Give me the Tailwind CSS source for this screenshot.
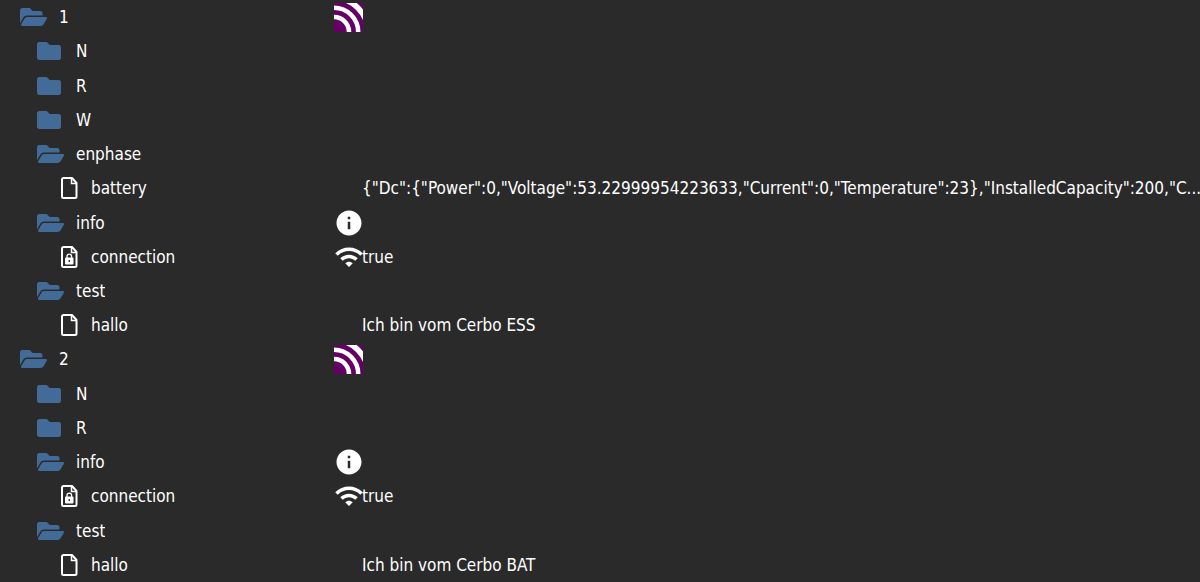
<!DOCTYPE html>
<html lang="de">
<head>
  <meta charset="UTF-8">
  <meta name="viewport" content="width=device-width, initial-scale=1.0">
  <title>Objekte</title>
  <script src="https://cdn.jsdelivr.net/npm/@tailwindcss/browser@4"></script>
</head>
<body class="bg-[#2a2a2a] text-white text-[17px] leading-6 font-['DejaVu_Sans_Condensed','DejaVu_Sans',sans-serif]">
  <!-- Icons -->
  <svg class="hidden" aria-hidden="true">
    <symbol id="closed" viewBox="0 0 576 512">
      <path d="M464 128H272l-64-64H48C21.5 64 0 85.5 0 112v288c0 26.5 21.5 48 48 48h416c26.5 0 48-21.5 48-48V176c0-26.5-21.5-48-48-48z"/>
    </symbol>
    <symbol id="open" viewBox="0 0 576 512">
      <path d="M572.694 292.093L500.27 416.248A63.997 63.997 0 0 1 444.989 448H45.025c-18.523 0-30.064-20.093-20.731-36.093l72.424-124.155A64 64 0 0 1 152 256h399.964c18.523 0 30.064 20.093 20.73 36.093zM152 224h328v-48c0-26.51-21.49-48-48-48H272l-64-64H48C21.49 64 0 85.49 0 112v278.046l69.077-118.418C86.214 242.25 117.989 224 152 224z"/>
    </symbol>
    <symbol id="file" viewBox="0 0 22 24">
      <path d="M5.500 2H14l4.500 5v13.500a1.500 1.500 0 0 1-1.500 1.500H5.500A1.500 1.500 0 0 1 4 20.500v-17A1.500 1.500 0 0 1 5.500 2z" fill="none" stroke="currentColor" stroke-width="2" stroke-linejoin="round"/>
      <path d="M13.500 2.500v5H19" fill="none" stroke="currentColor" stroke-width="1.500"/>
    </symbol>
    <symbol id="lock" viewBox="0 0 22 24">
      <use href="#file" width="22" height="24"/>
      <path d="M9 13v-1.500a2.300 2.300 0 0 1 4.600 0V13" fill="none" stroke="currentColor" stroke-width="1.300"/>
      <rect x="7" y="12.500" width="8.500" height="7" rx="1"/>
      <circle cx="11.300" cy="16" r=".9" fill="#2a2a2a"/>
    </symbol>
    <symbol id="mqtt" viewBox="0 0 29 29">
      <path fill="#660066" d="M0 0h29v29H0z"/>
      <g fill="none" stroke="#fff" stroke-width="4.500">
        <circle cx="0" cy="29" r="15"/>
        <circle cx="0" cy="29" r="24.200"/>
        <circle cx="0" cy="29" r="34" stroke-width="5.500"/>
      </g>
    </symbol>
    <symbol id="info" viewBox="0 0 24 24">
      <path d="M12 2C6.48 2 2 6.48 2 12s4.48 10 10 10 10-4.48 10-10S17.52 2 12 2zm1 15h-2v-6h2v6zm0-8h-2V7h2v2z"/>
    </symbol>
    <symbol id="wifi" viewBox="0 0 24 24">
      <path d="M1 9l2 2c4.97-4.97 13.03-4.97 18 0l2-2C16.93 2.93 7.08 2.93 1 9zm8 8l3 3 3-3c-1.65-1.66-4.34-1.66-6 0zm-4-4l2 2c2.76-2.76 7.24-2.76 10 0l2-2C15.14 9.14 8.87 9.14 5 13z"/>
    </symbol>
  </svg>

  <table class="w-full h-screen table-fixed border-collapse">
    <colgroup>
      <col class="w-[335px]">
      <col>
    </colgroup>
    <tbody id="tree"></tbody>
  </table>

  <script>
    const rows = [
      [0, 'open', '1', 'mqtt', ''],
      [1, 'closed', 'N', '', ''],
      [1, 'closed', 'R', '', ''],
      [1, 'closed', 'W', '', ''],
      [1, 'open', 'enphase', '', ''],
      [2, 'file', 'battery', '', '{"Dc":{"Power":0,"Voltage":53.22999954223633,"Current":0,"Temperature":23},"InstalledCapacity":200,"C...'],
      [1, 'open', 'info', 'info', ''],
      [2, 'lock', 'connection', 'wifi', 'true'],
      [1, 'open', 'test', '', ''],
      [2, 'file', 'hallo', '', 'Ich bin vom Cerbo ESS'],
      [0, 'open', '2', 'mqtt', ''],
      [1, 'closed', 'N', '', ''],
      [1, 'closed', 'R', '', ''],
      [1, 'open', 'info', 'info', ''],
      [2, 'lock', 'connection', 'wifi', 'true'],
      [1, 'open', 'test', '', ''],
      [2, 'file', 'hallo', '', 'Ich bin vom Cerbo BAT']
    ];

    const indent = ['pl-5', 'pl-[37px]', 'pl-[58px]'];
    const iconSize = {
      open: 'w-[27px] h-6 mr-3 text-[#436b98]',
      closed: 'w-[27px] h-6 mr-3 text-[#436b98]',
      file: 'w-[22px] h-6 mr-[11px]',
      lock: 'w-[22px] h-6 mr-[11px]'
    };
    const stateSize = {
      mqtt: 'size-[29px]',
      info: 'size-[30px]',
      wifi: 'size-[30px]'
    };

    document.getElementById('tree').innerHTML = rows.map(([level, icon, name, state, value]) => `
      <tr>
        <th scope="row" class="p-0 font-normal text-left">
          <div class="flex h-[30px] items-center ${indent[level]}">
            <svg class="shrink-0 fill-current ${iconSize[icon]}" aria-hidden="true"><use href="#${icon}"/></svg>
            <span class="truncate">${name}</span>
          </div>
        </th>
        <td class="p-0">
          <div class="flex h-[30px] items-center">
            <span class="flex w-[27px] shrink-0 justify-center">
              ${state ? `<svg class="shrink-0 fill-current ${stateSize[state]}" aria-hidden="true"><use href="#${state}"/></svg>` : ''}
            </span>
            <span class="whitespace-nowrap">${value}</span>
          </div>
        </td>
      </tr>
    `).join('');
  </script>
</body>
</html>
